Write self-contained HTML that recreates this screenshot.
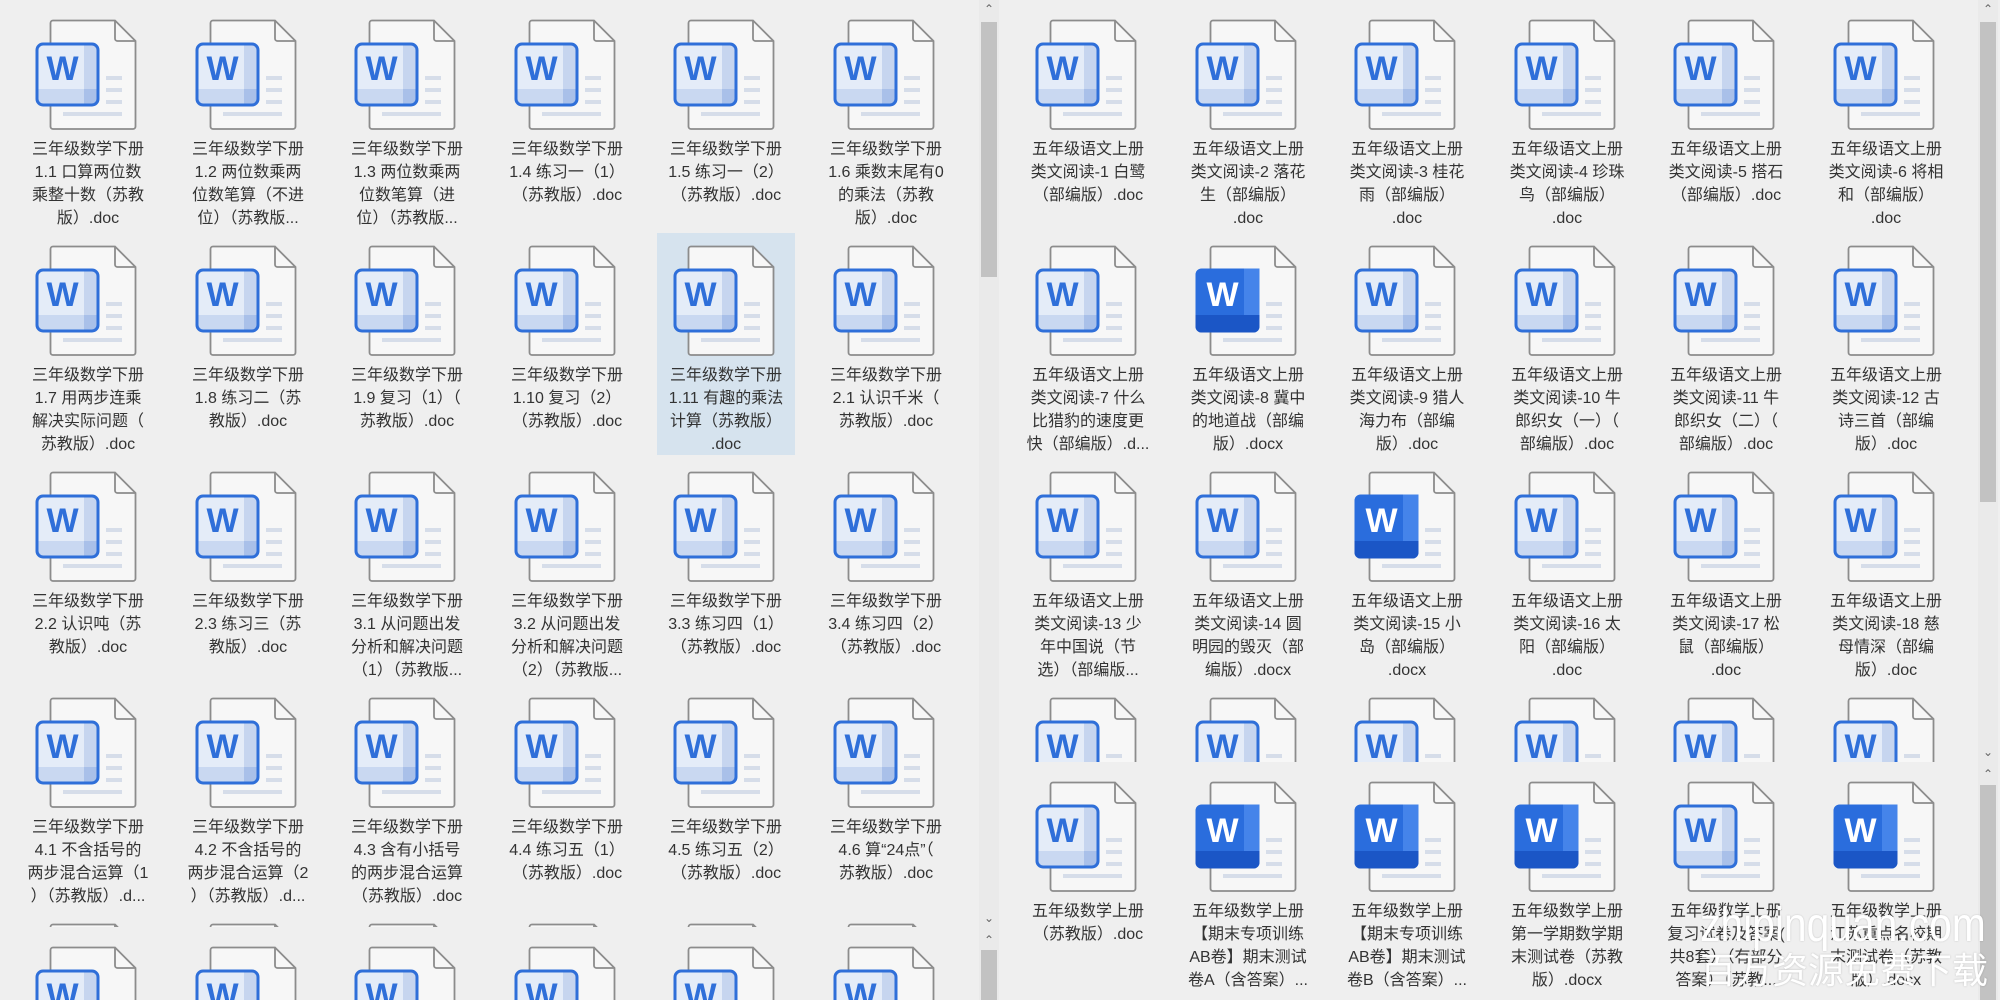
<!DOCTYPE html>
<html><head><meta charset="utf-8">
<style>
*{margin:0;padding:0;box-sizing:border-box}
html,body{width:2000px;height:1000px;overflow:hidden}
body{background:#efefef;position:relative;font-family:"Liberation Sans","Noto Sans CJK SC",sans-serif;}
.sec{position:absolute;overflow:hidden}
.c{position:absolute;width:138px;height:222px}
.c.sel{background:#d6e3ee}
.c svg{position:absolute;left:16px;top:12px;width:104px;height:112px;overflow:visible}
.c .t{position:absolute;left:-20px;width:178px;top:131px;text-align:center;font-size:16px;line-height:23px;color:#333;white-space:nowrap}
.sb{position:absolute;background:#eaeaea;width:20px}
.th{position:absolute;left:2px;width:16px;background:#c2c2c2}
.ar{position:absolute;left:0;width:20px;text-align:center;font-size:12px;color:#666;line-height:12px}
.wm{position:absolute;color:#fff;white-space:nowrap;text-shadow:0 0 2px rgba(0,0,0,.2);transform-origin:0 0;z-index:5}
</style></head><body>
<svg width="0" height="0" style="position:absolute">
<defs>
<g id="pg">
<path d="M18,1.5H80L100.5,22V107.5a2.5,2.5 0 0 1-2.5,2.5H18a2.5,2.5 0 0 1-2.5-2.5V4a2.5,2.5 0 0 1 2.5-2.5Z" fill="#f7f7f7" stroke="#8c8c8c" stroke-width="1.8"/>
<path d="M80,1.5V19.5a2.5,2.5 0 0 0 2.5,2.5H100.5" fill="none" stroke="#8c8c8c" stroke-width="1.8"/>
<g stroke="#d6dde9" stroke-width="4"><line x1="71" y1="59" x2="87" y2="59"/><line x1="71" y1="71" x2="87" y2="71"/><line x1="71" y1="83" x2="87" y2="83"/><line x1="28" y1="95" x2="87" y2="95"/></g>
</g>
<g id="wl">
<use href="#pg"/>
<rect x="2" y="25" width="61" height="61" rx="6" fill="#e4ecf8"/>
<rect x="49" y="26" width="13" height="59" fill="#c6d5ef"/>
<rect x="3" y="70" width="59" height="15" fill="#c9d8f1"/>
<rect x="49" y="70" width="13" height="15" fill="#a9c0e9"/>
<rect x="2" y="25" width="61" height="61" rx="6" fill="none" stroke="#2f6fd9" stroke-width="3"/>
<text x="27.5" y="61" text-anchor="middle" font-family="Liberation Sans" font-weight="bold" font-size="34" fill="#2f6fd9">W</text>
</g>
<g id="wd">
<use href="#pg"/>
<rect x="0.5" y="23.5" width="64" height="64" rx="6" fill="#2a6ddd"/>
<rect x="49" y="23.5" width="15.5" height="48" fill="#4584ea"/>
<path d="M0.5,70H64.5V81.5a6,6 0 0 1-6,6H6.5a6,6 0 0 1-6-6Z" fill="#1b56c6"/>
<text x="27.5" y="61" text-anchor="middle" font-family="Liberation Sans" font-weight="bold" font-size="34" fill="#fff">W</text>
</g>
</defs></svg>

<!-- LEFT MAIN -->
<div class="sec" style="left:0;top:0;width:979px;height:927px">
<div class="c" style="left:19px;top:7px"><svg><use href="#wl"/></svg><div class="t">三年级数学下册<br>1.1 口算两位数<br>乘整十数（苏教<br>版）.doc</div></div>
<div class="c" style="left:179px;top:7px"><svg><use href="#wl"/></svg><div class="t">三年级数学下册<br>1.2 两位数乘两<br>位数笔算（不进<br>位）（苏教版...</div></div>
<div class="c" style="left:338px;top:7px"><svg><use href="#wl"/></svg><div class="t">三年级数学下册<br>1.3 两位数乘两<br>位数笔算（进<br>位）（苏教版...</div></div>
<div class="c" style="left:498px;top:7px"><svg><use href="#wl"/></svg><div class="t">三年级数学下册<br>1.4 练习一（1）<br>（苏教版）.doc</div></div>
<div class="c" style="left:657px;top:7px"><svg><use href="#wl"/></svg><div class="t">三年级数学下册<br>1.5 练习一（2）<br>（苏教版）.doc</div></div>
<div class="c" style="left:817px;top:7px"><svg><use href="#wl"/></svg><div class="t">三年级数学下册<br>1.6 乘数末尾有0<br>的乘法（苏教<br>版）.doc</div></div>

<div class="c" style="left:19px;top:233px"><svg><use href="#wl"/></svg><div class="t">三年级数学下册<br>1.7 用两步连乘<br>解决实际问题（<br>苏教版）.doc</div></div>
<div class="c" style="left:179px;top:233px"><svg><use href="#wl"/></svg><div class="t">三年级数学下册<br>1.8 练习二（苏<br>教版）.doc</div></div>
<div class="c" style="left:338px;top:233px"><svg><use href="#wl"/></svg><div class="t">三年级数学下册<br>1.9 复习（1）（<br>苏教版）.doc</div></div>
<div class="c" style="left:498px;top:233px"><svg><use href="#wl"/></svg><div class="t">三年级数学下册<br>1.10 复习（2）<br>（苏教版）.doc</div></div>
<div class="c sel" style="left:657px;top:233px"><svg><use href="#wl"/></svg><div class="t">三年级数学下册<br>1.11 有趣的乘法<br>计算（苏教版）<br>.doc</div></div>
<div class="c" style="left:817px;top:233px"><svg><use href="#wl"/></svg><div class="t">三年级数学下册<br>2.1 认识千米（<br>苏教版）.doc</div></div>

<div class="c" style="left:19px;top:459px"><svg><use href="#wl"/></svg><div class="t">三年级数学下册<br>2.2 认识吨（苏<br>教版）.doc</div></div>
<div class="c" style="left:179px;top:459px"><svg><use href="#wl"/></svg><div class="t">三年级数学下册<br>2.3 练习三（苏<br>教版）.doc</div></div>
<div class="c" style="left:338px;top:459px"><svg><use href="#wl"/></svg><div class="t">三年级数学下册<br>3.1 从问题出发<br>分析和解决问题<br>（1）（苏教版...</div></div>
<div class="c" style="left:498px;top:459px"><svg><use href="#wl"/></svg><div class="t">三年级数学下册<br>3.2 从问题出发<br>分析和解决问题<br>（2）（苏教版...</div></div>
<div class="c" style="left:657px;top:459px"><svg><use href="#wl"/></svg><div class="t">三年级数学下册<br>3.3 练习四（1）<br>（苏教版）.doc</div></div>
<div class="c" style="left:817px;top:459px"><svg><use href="#wl"/></svg><div class="t">三年级数学下册<br>3.4 练习四（2）<br>（苏教版）.doc</div></div>

<div class="c" style="left:19px;top:685px"><svg><use href="#wl"/></svg><div class="t">三年级数学下册<br>4.1 不含括号的<br>两步混合运算（1<br>）（苏教版）.d...</div></div>
<div class="c" style="left:179px;top:685px"><svg><use href="#wl"/></svg><div class="t">三年级数学下册<br>4.2 不含括号的<br>两步混合运算（2<br>）（苏教版）.d...</div></div>
<div class="c" style="left:338px;top:685px"><svg><use href="#wl"/></svg><div class="t">三年级数学下册<br>4.3 含有小括号<br>的两步混合运算<br>（苏教版）.doc</div></div>
<div class="c" style="left:498px;top:685px"><svg><use href="#wl"/></svg><div class="t">三年级数学下册<br>4.4 练习五（1）<br>（苏教版）.doc</div></div>
<div class="c" style="left:657px;top:685px"><svg><use href="#wl"/></svg><div class="t">三年级数学下册<br>4.5 练习五（2）<br>（苏教版）.doc</div></div>
<div class="c" style="left:817px;top:685px"><svg><use href="#wl"/></svg><div class="t">三年级数学下册<br>4.6 算“24点”（<br>苏教版）.doc</div></div>

<div class="c" style="left:19px;top:911px"><svg><use href="#wl"/></svg></div>
<div class="c" style="left:179px;top:911px"><svg><use href="#wl"/></svg></div>
<div class="c" style="left:338px;top:911px"><svg><use href="#wl"/></svg></div>
<div class="c" style="left:498px;top:911px"><svg><use href="#wl"/></svg></div>
<div class="c" style="left:657px;top:911px"><svg><use href="#wl"/></svg></div>
<div class="c" style="left:817px;top:911px"><svg><use href="#wl"/></svg></div>
</div>
<!-- LEFT BOTTOM -->
<div class="sec" style="left:0;top:927px;width:979px;height:73px">
<div class="c" style="left:19px;top:7px"><svg><use href="#wl"/></svg></div>
<div class="c" style="left:179px;top:7px"><svg><use href="#wl"/></svg></div>
<div class="c" style="left:338px;top:7px"><svg><use href="#wl"/></svg></div>
<div class="c" style="left:498px;top:7px"><svg><use href="#wl"/></svg></div>
<div class="c" style="left:657px;top:7px"><svg><use href="#wl"/></svg></div>
<div class="c" style="left:817px;top:7px"><svg><use href="#wl"/></svg></div>
</div>
<div class="sb" style="left:979px;top:0;height:1000px">
<div class="ar" style="top:3px">&#8963;</div>
<div class="th" style="top:22px;height:255px"></div>
<div class="ar" style="top:912px">&#8964;</div>
<div class="ar" style="top:934px">&#8963;</div>
<div class="th" style="top:950px;height:50px"></div>
</div>

<!-- RIGHT MAIN -->
<div class="sec" style="left:0;top:0;width:1978px;height:762px">
<div class="c" style="left:1019px;top:7px"><svg><use href="#wl"/></svg><div class="t">五年级语文上册<br>类文阅读-1 白鹭<br>（部编版）.doc</div></div>
<div class="c" style="left:1179px;top:7px"><svg><use href="#wl"/></svg><div class="t">五年级语文上册<br>类文阅读-2 落花<br>生（部编版）<br>.doc</div></div>
<div class="c" style="left:1338px;top:7px"><svg><use href="#wl"/></svg><div class="t">五年级语文上册<br>类文阅读-3 桂花<br>雨（部编版）<br>.doc</div></div>
<div class="c" style="left:1498px;top:7px"><svg><use href="#wl"/></svg><div class="t">五年级语文上册<br>类文阅读-4 珍珠<br>鸟（部编版）<br>.doc</div></div>
<div class="c" style="left:1657px;top:7px"><svg><use href="#wl"/></svg><div class="t">五年级语文上册<br>类文阅读-5 搭石<br>（部编版）.doc</div></div>
<div class="c" style="left:1817px;top:7px"><svg><use href="#wl"/></svg><div class="t">五年级语文上册<br>类文阅读-6 将相<br>和（部编版）<br>.doc</div></div>

<div class="c" style="left:1019px;top:233px"><svg><use href="#wl"/></svg><div class="t">五年级语文上册<br>类文阅读-7 什么<br>比猎豹的速度更<br>快（部编版）.d...</div></div>
<div class="c" style="left:1179px;top:233px"><svg><use href="#wd"/></svg><div class="t">五年级语文上册<br>类文阅读-8 冀中<br>的地道战（部编<br>版）.docx</div></div>
<div class="c" style="left:1338px;top:233px"><svg><use href="#wl"/></svg><div class="t">五年级语文上册<br>类文阅读-9 猎人<br>海力布（部编<br>版）.doc</div></div>
<div class="c" style="left:1498px;top:233px"><svg><use href="#wl"/></svg><div class="t">五年级语文上册<br>类文阅读-10 牛<br>郎织女（一）（<br>部编版）.doc</div></div>
<div class="c" style="left:1657px;top:233px"><svg><use href="#wl"/></svg><div class="t">五年级语文上册<br>类文阅读-11 牛<br>郎织女（二）（<br>部编版）.doc</div></div>
<div class="c" style="left:1817px;top:233px"><svg><use href="#wl"/></svg><div class="t">五年级语文上册<br>类文阅读-12 古<br>诗三首（部编<br>版）.doc</div></div>

<div class="c" style="left:1019px;top:459px"><svg><use href="#wl"/></svg><div class="t">五年级语文上册<br>类文阅读-13 少<br>年中国说（节<br>选）（部编版...</div></div>
<div class="c" style="left:1179px;top:459px"><svg><use href="#wl"/></svg><div class="t">五年级语文上册<br>类文阅读-14 圆<br>明园的毁灭（部<br>编版）.docx</div></div>
<div class="c" style="left:1338px;top:459px"><svg><use href="#wd"/></svg><div class="t">五年级语文上册<br>类文阅读-15 小<br>岛（部编版）<br>.docx</div></div>
<div class="c" style="left:1498px;top:459px"><svg><use href="#wl"/></svg><div class="t">五年级语文上册<br>类文阅读-16 太<br>阳（部编版）<br>.doc</div></div>
<div class="c" style="left:1657px;top:459px"><svg><use href="#wl"/></svg><div class="t">五年级语文上册<br>类文阅读-17 松<br>鼠（部编版）<br>.doc</div></div>
<div class="c" style="left:1817px;top:459px"><svg><use href="#wl"/></svg><div class="t">五年级语文上册<br>类文阅读-18 慈<br>母情深（部编<br>版）.doc</div></div>

<div class="c" style="left:1019px;top:685px"><svg><use href="#wl"/></svg></div>
<div class="c" style="left:1179px;top:685px"><svg><use href="#wl"/></svg></div>
<div class="c" style="left:1338px;top:685px"><svg><use href="#wl"/></svg></div>
<div class="c" style="left:1498px;top:685px"><svg><use href="#wl"/></svg></div>
<div class="c" style="left:1657px;top:685px"><svg><use href="#wl"/></svg></div>
<div class="c" style="left:1817px;top:685px"><svg><use href="#wl"/></svg></div>
</div>
<!-- RIGHT BOTTOM -->
<div class="sec" style="left:0;top:762px;width:1978px;height:238px">
<div class="c" style="left:1019px;top:7px"><svg><use href="#wl"/></svg><div class="t">五年级数学上册<br>（苏教版）.doc</div></div>
<div class="c" style="left:1179px;top:7px"><svg><use href="#wd"/></svg><div class="t">五年级数学上册<br>【期末专项训练<br>AB卷】期末测试<br>卷A（含答案）...</div></div>
<div class="c" style="left:1338px;top:7px"><svg><use href="#wd"/></svg><div class="t">五年级数学上册<br>【期末专项训练<br>AB卷】期末测试<br>卷B（含答案）...</div></div>
<div class="c" style="left:1498px;top:7px"><svg><use href="#wd"/></svg><div class="t">五年级数学上册<br>第一学期数学期<br>末测试卷（苏教<br>版）.docx</div></div>
<div class="c" style="left:1657px;top:7px"><svg><use href="#wl"/></svg><div class="t">五年级数学上册<br>复习试卷及答案(<br>共8套）（有部分<br>答案）（苏教...</div></div>
<div class="c" style="left:1817px;top:7px"><svg><use href="#wd"/></svg><div class="t">五年级数学上册<br>江苏重点名校期<br>末测试卷（苏教<br>版）.docx</div></div>
</div>
<div class="sb" style="left:1978px;top:0;height:1000px">
<div class="ar" style="top:3px">&#8963;</div>
<div class="th" style="top:22px;height:480px"></div>
<div class="ar" style="top:746px">&#8964;</div>
<div class="ar" style="top:768px">&#8963;</div>
<div class="th" style="top:785px;height:215px"></div>
</div>

<div class="wm" style="left:1700px;top:900px;font-size:48px;line-height:52px;font-family:'Liberation Sans',sans-serif;transform:scaleX(0.85)">zhipinquan.com</div>
<div class="wm" style="left:1700px;top:950px;font-size:36px;line-height:42px;font-family:'Liberation Sans','Noto Sans CJK SC',sans-serif;font-weight:400">百万资源免费下载</div>
</body></html>
